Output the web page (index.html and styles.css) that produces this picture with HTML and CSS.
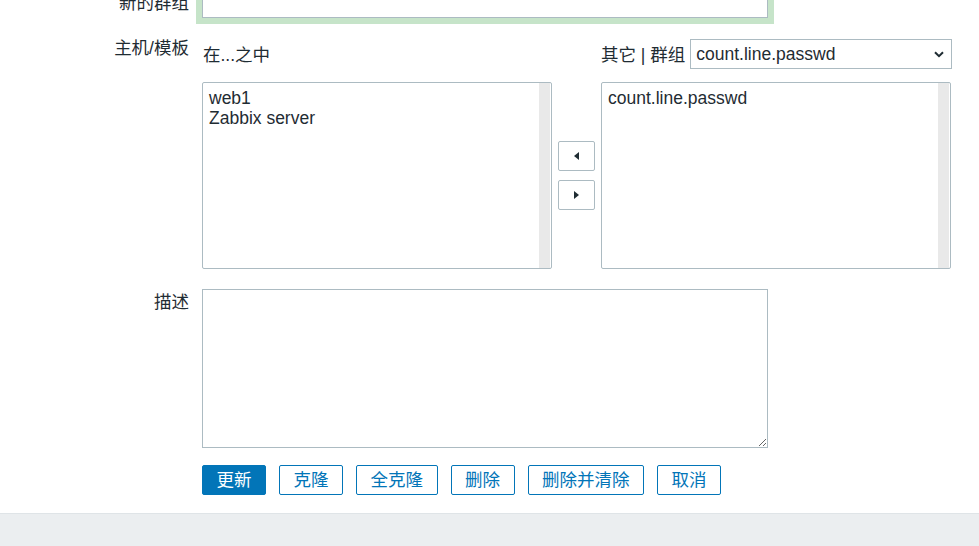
FILE: index.html
```html
<!DOCTYPE html>
<html lang="zh-CN">
<head>
<meta charset="utf-8">
<title>主机群组</title>
<link rel="stylesheet" href="styles.css">
</head>
<body>
<div class="page">
  <form class="form">
    <div class="row row-name">
      <label class="lbl lbl-name" for="name">新的群组</label>
      <div class="field"><input id="name" class="text-input focused" type="text"></div>
    </div>

    <div class="row row-hosts">
      <label class="lbl lbl-hosts">主机/模板</label>
      <div class="field">
        <div class="twin">
          <div class="twin-head-left">在...之中</div>
          <div></div>
          <div class="twin-head-right">
            <span class="head-label">其它 | 群组</span>
            <div class="select-wrap">
              <select class="select"><option>count.line.passwd</option></select>
              <svg class="chevron" width="10" height="7" viewBox="0 0 10 7"><path d="M1 1.2 L5 5.2 L9 1.2" fill="none" stroke="#1f2c33" stroke-width="2"/></svg>
            </div>
          </div>

          <div class="listbox">
            <div class="list-items">
              <div class="item">web1</div>
              <div class="item">Zabbix server</div>
            </div>
            <div class="track"></div>
          </div>

          <div class="move-buttons">
            <button type="button" class="move-btn"><svg width="5" height="8" viewBox="0 0 5 8"><path d="M5 0 L0 4 L5 8 Z" fill="#1f2c33"/></svg></button>
            <button type="button" class="move-btn"><svg width="5" height="8" viewBox="0 0 5 8"><path d="M0 0 L5 4 L0 8 Z" fill="#1f2c33"/></svg></button>
          </div>

          <div class="listbox">
            <div class="list-items">
              <div class="item">count.line.passwd</div>
            </div>
            <div class="track"></div>
          </div>
        </div>
      </div>
    </div>

    <div class="row row-desc">
      <label class="lbl lbl-desc" for="desc">描述</label>
      <div class="field"><textarea id="desc" class="textarea"></textarea></div>
    </div>

    <div class="row row-buttons">
      <div></div>
      <div class="buttons">
        <button type="button" class="btn btn-primary">更新</button>
        <button type="button" class="btn">克隆</button>
        <button type="button" class="btn">全克隆</button>
        <button type="button" class="btn">删除</button>
        <button type="button" class="btn">删除并清除</button>
        <button type="button" class="btn">取消</button>
      </div>
    </div>
  </form>
  <footer class="footer"></footer>
</div>
</body>
</html>
```

FILE: styles.css
```css
* { box-sizing: border-box; }

html, body {
  margin: 0;
  padding: 0;
  background: #ffffff;
  overflow: hidden;
}

body {
  font-family: "Liberation Sans", Arial, "Noto Sans CJK SC", sans-serif;
  font-size: 17.5px;
  color: #1f2c33;
}

.page {
  width: 979px;
  height: 546px;
  overflow: hidden;
  display: flex;
  flex-direction: column;
}

.form {
  margin-top: -12px;
  display: flex;
  flex-direction: column;
}

.row {
  display: grid;
  grid-template-columns: 189px 1fr;
  column-gap: 13px;
}

.lbl {
  text-align: right;
  line-height: 20px;
  white-space: nowrap;
}

.lbl-name { padding-top: 5px; }
.lbl-hosts { padding-top: 0; margin-top: -1px; }
.lbl-desc { padding-top: 3px; }

.row-hosts { margin-top: 21px; }
.row-desc { margin-top: 20px; }
.row-buttons { margin-top: 17px; }

.text-input {
  display: block;
  width: 566px;
  height: 30px;
  border: 1px solid #acbbc2;
  background: #fff;
  font: inherit;
  color: inherit;
  padding: 0 6px;
  outline: none;
}

.text-input.focused {
  box-shadow: 0 0 0 6px #c6e4c9;
}

/* hosts / templates twin box */
.twin {
  display: grid;
  grid-template-columns: 350px 37px 350px;
  grid-template-rows: 30px 187px;
  column-gap: 6px;
  row-gap: 13px;
}

.twin-head-left {
  display: flex;
  align-items: center;
  padding-left: 1px;
  padding-top: 2px;
  line-height: 20px;
}

.twin-head-right {
  display: flex;
  align-items: center;
  gap: 5px;
  margin-right: -1px;
}

.head-label {
  white-space: nowrap;
  line-height: 20px;
  padding-top: 1px;
}

.select-wrap {
  position: relative;
  flex: 1;
  height: 30px;
}

.select {
  appearance: none;
  -webkit-appearance: none;
  width: 100%;
  height: 30px;
  border: 1px solid #acbbc2;
  border-radius: 0;
  background: #fff;
  font: inherit;
  color: #1f2c33;
  padding: 0 24px 0 5px;
  outline: none;
}

.chevron {
  position: absolute;
  right: 8px;
  top: 12px;
  pointer-events: none;
}

.listbox {
  display: flex;
  border: 1px solid #acbbc2;
  border-radius: 2px;
  background: #fff;
  overflow: hidden;
}

.list-items {
  flex: 1;
  padding: 5px 6px;
}

.item {
  line-height: 20px;
  white-space: nowrap;
}

.track {
  width: 11px;
  background: #e9e9e9;
  margin-right: 1px;
}

.move-buttons {
  display: flex;
  flex-direction: column;
  justify-content: center;
  gap: 9px;
}

.move-btn {
  width: 37px;
  height: 30px;
  border: 1px solid #acbbc2;
  border-radius: 2px;
  background: #fff;
  padding: 0;
  display: flex;
  align-items: center;
  justify-content: center;
}

.textarea {
  display: block;
  width: 566px;
  height: 159px;
  border: 1px solid #acbbc2;
  border-radius: 0;
  background: #fff;
  font: inherit;
  color: inherit;
  padding: 4px 6px;
  resize: both;
  outline: none;
}

.buttons {
  display: flex;
  gap: 13px;
}

.btn {
  height: 30px;
  padding: 0 13.5px;
  border: 1px solid #0275b8;
  border-radius: 2px;
  background: #fff;
  color: #0275b8;
  font-family: "Liberation Sans", Arial, "Noto Sans CJK SC", sans-serif;
  font-size: 17.5px;
  line-height: 28px;
  white-space: nowrap;
}

.btn-primary {
  background: #0275b8;
  color: #fff;
}

.footer {
  margin-top: 18px;
  flex: 1;
  background: #ebeef0;
  border-top: 1px solid #dfe4e7;
}
```
